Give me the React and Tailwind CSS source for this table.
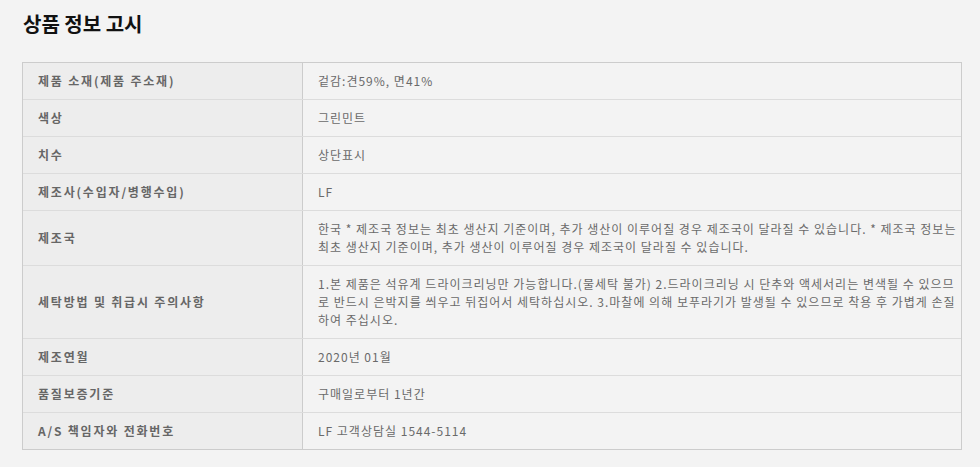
import React from 'react';

const rows = [
  { label: '제품 소재(제품 주소재)', value: '겉감:견59%, 면41%' },
  { label: '색상', value: '그린민트' },
  { label: '치수', value: '상단표시' },
  { label: '제조사(수입자/병행수입)', value: 'LF' },
  {
    label: '제조국',
    value:
      '한국 * 제조국 정보는 최초 생산지 기준이며, 추가 생산이 이루어질 경우 제조국이 달라질 수 있습니다. * 제조국 정보는 최초 생산지 기준이며, 추가 생산이 이루어질 경우 제조국이 달라질 수 있습니다.',
  },
  {
    label: '세탁방법 및 취급시 주의사항',
    value:
      '1.본 제품은 석유계 드라이크리닝만 가능합니다.(물세탁 불가) 2.드라이크리닝 시 단추와 액세서리는 변색될 수 있으므로 반드시 은박지를 씌우고 뒤집어서 세탁하십시오. 3.마찰에 의해 보푸라기가 발생될 수 있으므로 착용 후 가볍게 손질하여 주십시오.',
  },
  { label: '제조연월', value: '2020년 01월' },
  { label: '품질보증기준', value: '구매일로부터 1년간' },
  { label: 'A/S 책임자와 전화번호', value: 'LF 고객상담실 1544-5114' },
];

const InfoRow = ({ label, value, last }) => (
  <div className={`flex ${last ? '' : 'border-b border-[#dcdcdc]'}`}>
    <div className="w-[280px] shrink-0 flex items-center bg-[#ededed] border-r border-[#cccccc] px-[15px] py-[9px] text-[12px] leading-[18px] font-bold text-[#666666] tracking-[1.8px]">
      {label}
    </div>
    <div className="flex-1 pl-[15px] pr-[3px] py-[9px] text-[12px] leading-[18px] text-[#6a6a6a] tracking-[1px] break-all">
      {value}
    </div>
  </div>
);

const App = () => {
  return (
    <div
      className="min-h-[467px] bg-[#f3f3f3] px-[22px] pt-[9px] pb-4"
      style={{ fontFamily: '"Noto Sans CJK KR", "Noto Sans", sans-serif' }}
    >
      <h2 className="pl-[1px] text-[20px] leading-[30px] font-bold text-[#111111]">
        상품 정보 고시
      </h2>

      <div className="mt-[23px] w-[940px] border border-[#cccccc]">
        {rows.map((row, i) => (
          <InfoRow key={row.label} label={row.label} value={row.value} last={i === rows.length - 1} />
        ))}
      </div>
    </div>
  );
};

export default App;
